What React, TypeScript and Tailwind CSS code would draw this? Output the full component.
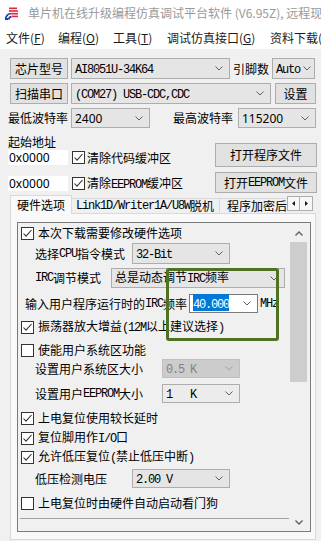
import React from "react";

type Kids = { children?: React.ReactNode; className?: string };

// SimSun-like half width ascii
const A = ({ children }: Kids) => (
  <span className="font-['Liberation_Mono',monospace] text-[12px] tracking-[-1.2px]">{children}</span>
);

function Chevron({ color = "#5f5f5f" }: { color?: string }) {
  return (
    <svg width="8" height="5" viewBox="0 0 8 5" className="shrink-0">
      <polyline points="0.5,0.5 4,4 7.5,0.5" fill="none" stroke={color} strokeWidth="1" />
    </svg>
  );
}

function Btn({ children, className = "" }: Kids) {
  return (
    <div className={`flex shrink-0 items-center justify-center whitespace-nowrap border border-[#adadad] bg-[#e1e1e1] ${className}`}>
      {children}
    </div>
  );
}

function Combo({
  children,
  className = "",
  tone = "gray",
  chev = "mr-[6px]",
}: Kids & { tone?: "gray" | "white" | "light" | "off"; chev?: string }) {
  const look =
    tone === "white"
      ? "border-[#7a7a7a] bg-white"
      : tone === "off"
      ? "border-[#bfbfbf] bg-[#cccccc] text-[#838383]"
      : tone === "light"
      ? "border-[#adadad] bg-[#ececec]"
      : "border-[#adadad] bg-[#e5e5e5]";
  return (
    <div className={`flex shrink-0 items-center whitespace-nowrap border pl-[3px] ${look} ${className}`}>
      <div className="min-w-0 flex-1">{children}</div>
      <div className={chev}>
        <Chevron color={tone === "off" ? "#a0a0a0" : "#5f5f5f"} />
      </div>
    </div>
  );
}

function Check({ on = true }: { on?: boolean }) {
  return (
    <span className="flex h-[13px] w-[13px] shrink-0 items-center justify-center border border-[#333333] bg-white">
      {on && (
        <svg width="11" height="11" viewBox="0 0 11 11">
          <polyline points="1.5,5.5 4,8.2 9.5,2" fill="none" stroke="#333333" strokeWidth="1.1" />
        </svg>
      )}
    </span>
  );
}

function CheckRow({ on = true, children, className = "" }: Kids & { on?: boolean }) {
  return (
    <div className={`flex h-[16px] items-center whitespace-nowrap pl-[3px] ${className}`}>
      <Check on={on} />
      <span className="ml-[4px]">{children}</span>
    </div>
  );
}

function Logo() {
  return (
    <svg width="13" height="13" viewBox="0 0 13 13" className="shrink-0">
      <rect x="4" y="0.5" width="8" height="1.6" fill="#e4263f" />
      <rect x="4" y="3.2" width="9" height="1.6" fill="#e4263f" />
      <rect x="5" y="5.9" width="8" height="1.6" fill="#e4263f" />
      <rect x="7" y="8.6" width="6" height="1.6" fill="#e4263f" />
      <path d="M0.5 12.5 A7 7 0 0 1 5 6.5" fill="none" stroke="#1f3fb0" strokeWidth="1.8" />
      <path d="M3.5 12.5 A4 4 0 0 1 6.5 9.5" fill="none" stroke="#1f3fb0" strokeWidth="1.8" />
      <rect x="0" y="11" width="3" height="2" fill="#1f3fb0" />
    </svg>
  );
}

function Scrollbar() {
  return (
    <div className="mr-[3px] flex w-[17px] shrink-0 flex-col">
      <div className="flex h-[19px] items-center justify-center pt-[2px]">
        <svg width="8" height="5" viewBox="0 0 8 5">
          <polyline points="0.5,4.5 4,1 7.5,4.5" fill="none" stroke="#606060" strokeWidth="1.4" />
        </svg>
      </div>
      <div className="h-[140px] bg-[#cdcdcd]" />
      <div className="flex-1" />
      <div className="flex h-[17px] items-center justify-center pb-[1px]">
        <svg width="8" height="5" viewBox="0 0 8 5">
          <polyline points="0.5,0.5 4,4 7.5,0.5" fill="none" stroke="#606060" strokeWidth="1.4" />
        </svg>
      </div>
    </div>
  );
}

export default function App() {
  return (
    <div className="relative h-[541px] w-[321px] overflow-hidden bg-[#f0f0f0] font-['Noto_Sans_CJK_SC',sans-serif] text-[12px] leading-none text-black">
      {/* title bar */}
      <div className="flex h-[26px] items-center bg-white pl-[5px]">
        <Logo />
        <span className="ml-[10px] whitespace-nowrap text-[#999999]">
          单片机在线升级编程仿真调试平台软件 (V6.95Z), 远程现
        </span>
      </div>

      {/* menu */}
      <div className="flex h-[23px] items-center whitespace-nowrap bg-white pl-[6px] text-[#1a1a1a]">
        <span className="w-[52px] shrink-0">
          文件(<span className="underline">F</span>)
        </span>
        <span className="w-[55px] shrink-0">
          编程(<span className="underline">O</span>)
        </span>
        <span className="w-[54px] shrink-0">
          工具(<span className="underline">T</span>)
        </span>
        <span className="w-[103px] shrink-0">
          调试仿真接口(<span className="underline">G</span>)
        </span>
        <span className="shrink-0">资料下载(</span>
      </div>

      {/* chip row */}
      <div className="mt-[9px] flex h-[21px] pl-[10px]">
        <Btn className="w-[58px]">芯片型号</Btn>
        <Combo className="ml-[3px] w-[159px]">
          <A>AI8051U-34K64</A>
        </Combo>
        <span className="ml-[3px] flex w-[39px] shrink-0 items-center">引脚数</span>
        <Combo className="w-[43px]" chev="mr-[3px]">
          <A>Auto</A>
        </Combo>
      </div>

      {/* port row */}
      <div className="mt-[4px] flex h-[21px] pl-[10px]">
        <Btn className="w-[58px]">扫描串口</Btn>
        <Combo className="ml-[3px] w-[200px]">
          <A>(COM27) USB-CDC,CDC</A>
        </Combo>
        <Btn className="ml-[4px] w-[41px]">设置</Btn>
      </div>

      {/* baud row */}
      <div className="mt-[4px] flex h-[20px] pl-[8px]">
        <span className="flex w-[63px] shrink-0 items-center">最低波特率</span>
        <Combo className="w-[79px]">
          <span className="font-['Noto_Sans',sans-serif]">2400</span>
        </Combo>
        <span className="ml-[23px] flex w-[65px] shrink-0 items-center">最高波特率</span>
        <Combo className="w-[78px]">
          <span className="font-['Noto_Sans',sans-serif]">115200</span>
        </Combo>
      </div>

      {/* address + files */}
      <div className="mt-[8px] flex h-[59px]">
        <div className="flex flex-col pl-[8px]">
          <div className="flex h-[12px] items-center">起始地址</div>
          <div className="mt-[2px] flex h-[15px] items-center whitespace-nowrap">
            <div className="flex h-full w-[60px] items-center bg-white pl-[1px] font-['Noto_Sans',sans-serif]">0x0000</div>
            <span className="ml-[4px]">
              <Check />
            </span>
            <span className="ml-[2px]">清除代码缓冲区</span>
          </div>
          <div className="mt-[11px] flex h-[15px] items-center whitespace-nowrap">
            <div className="flex h-full w-[60px] items-center bg-white pl-[1px] font-['Noto_Sans',sans-serif]">0x0000</div>
            <span className="ml-[4px]">
              <Check />
            </span>
            <span className="ml-[2px]">
              清除<A>EEPROM</A>缓冲区
            </span>
          </div>
        </div>
        <div className="ml-auto mr-[4px] flex flex-col">
          <Btn className="mt-[7px] h-[24px] w-[102px]">打开程序文件</Btn>
          <Btn className="mt-[5px] h-[21px] w-[102px]">
            打开<A>EEPROM</A>文件
          </Btn>
        </div>
      </div>

      {/* tabs */}
      <div className="flex h-[18px] items-end whitespace-nowrap pl-[10px]">
        <div className="relative z-10 -mb-px flex h-[19px] w-[62px] shrink-0 items-center justify-center border border-b-0 border-[#d9d9d9] bg-[#f9f9f9]">
          硬件选项
        </div>
        <div className="flex h-[15px] w-[148px] shrink-0 items-center border border-b-0 border-l-0 border-[#d9d9d9] pl-[4px]">
          <A>Link1D/Writer1A/U8W</A>脱机
        </div>
        <div className="flex h-[15px] w-[67px] shrink-0 items-center overflow-hidden border-t border-[#d9d9d9] pl-[7px]">
          程序加密后
        </div>
        <div className="mb-[2px] flex h-[15px] shrink-0">
          <div className="flex w-[13px] items-center justify-center border border-[#adadad] bg-[#f7f7f7]">
            <svg width="3" height="5" viewBox="0 0 3 5">
              <polygon points="3,0 0,2.5 3,5" fill="#1a1a1a" />
            </svg>
          </div>
          <div className="flex w-[13px] items-center justify-center border border-l-0 border-[#adadad] bg-[#f7f7f7]">
            <svg width="3" height="5" viewBox="0 0 3 5">
              <polygon points="0,0 3,2.5 0,5" fill="#1a1a1a" />
            </svg>
          </div>
        </div>
      </div>

      {/* tab page */}
      <div className="ml-[10px] flex h-[327px] w-[306px] flex-col border border-[#d9d9d9] bg-[#f9f9f9] pb-[7px] pl-[6px] pr-[4px] pt-[8px]">
        <div className="flex flex-1 border border-[#7a7a7a] bg-[#f0f0f0]">
          <div className="flex min-w-0 flex-1 flex-col">
            <CheckRow className="mt-[2px]">本次下载需要修改硬件选项</CheckRow>

            <div className="mt-[2px] flex h-[21px] pl-[17px]">
              <span className="flex w-[97px] shrink-0 items-center whitespace-nowrap">
                选择<A>CPU</A>指令模式
              </span>
              <Combo className="w-[98px]">
                <A>32-Bit</A>
              </Combo>
            </div>

            <div className="mt-[4px] flex h-[20px] pl-[17px]">
              <span className="flex w-[76px] shrink-0 items-center whitespace-nowrap">
                <A>IRC</A>调节模式
              </span>
              <Combo className="w-[174px] pl-[2px]">
                总是动态调节<A>IRC</A>频率
              </Combo>
            </div>

            <div className="mt-[6px] flex h-[19px] whitespace-nowrap pl-[7px]">
              <span className="flex w-[164px] shrink-0 items-center">
                输入用户程序运行时的<A>IRC</A>频率
              </span>
              <Combo tone="white" className="w-[69px] pl-[1px]">
                <span className="bg-[#0078d7] text-white">
                  <A>40.000</A>
                </span>
              </Combo>
              <span className="ml-[2px] flex items-center">
                <A>MHz</A>
              </span>
            </div>

            <CheckRow className="mt-[6px]">
              振荡器放大增益<A>(12M</A>以上建议选择<A>)</A>
            </CheckRow>
            <CheckRow on={false} className="mt-[7px]">
              使能用户系统区功能
            </CheckRow>

            <div className="mt-[1px] flex h-[19px] whitespace-nowrap pl-[17px]">
              <span className="flex w-[127px] shrink-0 items-center">设置用户系统区大小</span>
              <Combo tone="off" className="w-[78px]">
                <A>0.5 K</A>
              </Combo>
            </div>

            <div className="mt-[6px] flex h-[19px] whitespace-nowrap pl-[17px]">
              <span className="flex w-[127px] shrink-0 items-center">
                设置用户<A>EEPROM</A>大小
              </span>
              <Combo tone="light" className="w-[78px]">
                <A>1&nbsp;&nbsp;&nbsp;K</A>
              </Combo>
            </div>

            <CheckRow className="mt-[7px]">上电复位使用较长延时</CheckRow>
            <CheckRow className="mt-[4px]">
              复位脚用作<A>I/O</A>口
            </CheckRow>
            <CheckRow className="mt-[3px]">
              允许低压复位<A>(</A>禁止低压中断<A>)</A>
            </CheckRow>

            <div className="mt-[4px] flex h-[19px] whitespace-nowrap pl-[17px]">
              <span className="flex w-[97px] shrink-0 items-center">低压检测电压</span>
              <Combo className="w-[98px]">
                <A>2.00 V</A>
              </Combo>
            </div>

            <CheckRow on={false} className="mt-[7px]">
              上电复位时由硬件自动启动看门狗
            </CheckRow>

            <div className="ml-[2px] mr-[1px] mt-[7px] h-px bg-[#a0a0a0]" />
          </div>
          <Scrollbar />
        </div>
      </div>

      {/* annotation */}
      <div className="absolute left-[166px] top-[268px] h-[73px] w-[113px] rounded-[3px] border-[3px] border-[#4e7123]" />
    </div>
  );
}
